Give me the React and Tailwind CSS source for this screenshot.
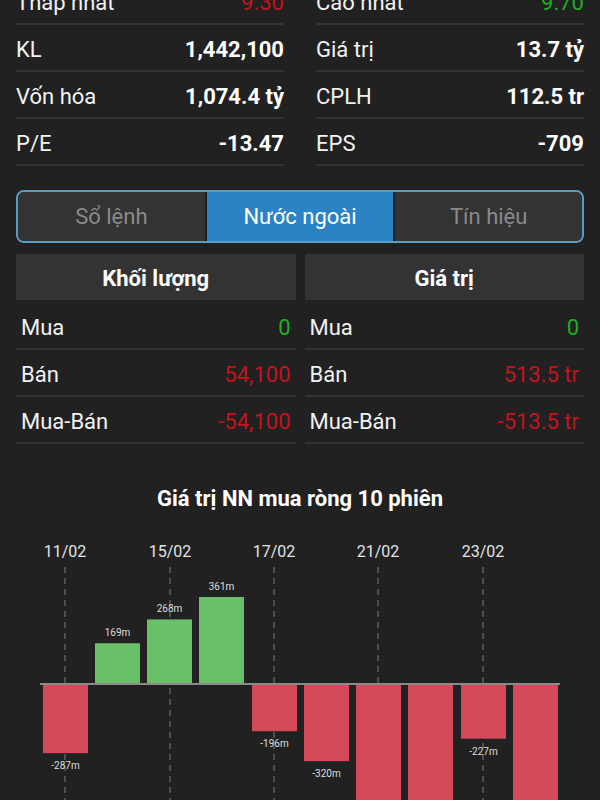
import React from "react";

const GREEN = "text-[#1fae22]";
const RED = "text-[#c3141d]";

const stats = [
  [
    { label: "Thấp nhất", value: "9.30", color: RED, bold: false },
    { label: "KL", value: "1,442,100" },
    { label: "Vốn hóa", value: "1,074.4 tỷ" },
    { label: "P/E", value: "-13.47" },
  ],
  [
    { label: "Cao nhất", value: "9.70", color: GREEN, bold: false },
    { label: "Giá trị", value: "13.7 tỷ" },
    { label: "CPLH", value: "112.5 tr" },
    { label: "EPS", value: "-709" },
  ],
];

const foreign = [
  [
    { label: "Mua", value: "0", color: GREEN },
    { label: "Bán", value: "54,100", color: RED },
    { label: "Mua-Bán", value: "-54,100", color: RED },
  ],
  [
    { label: "Mua", value: "0", color: GREEN },
    { label: "Bán", value: "513.5 tr", color: RED },
    { label: "Mua-Bán", value: "-513.5 tr", color: RED },
  ],
];

// net foreign value per session (millions); no label = runs off screen
const bars = [
  { x: 43, v: -287, label: "-287m" },
  { x: 95, v: 169, label: "169m" },
  { x: 147, v: 268, label: "268m" },
  { x: 199, v: 361, label: "361m" },
  { x: 252, v: -196, label: "-196m" },
  { x: 304, v: -320, label: "-320m" },
  { x: 356, v: -700 },
  { x: 408, v: -700 },
  { x: 461, v: -227, label: "-227m" },
  { x: 513, v: -700 },
];

const dates = [
  { x: 65, t: "11/02" },
  { x: 170, t: "15/02" },
  { x: 274, t: "17/02" },
  { x: 378, t: "21/02" },
  { x: 483, t: "23/02" },
];

function Chart() {
  const base = 684;
  const scale = 0.241;
  return (
    <svg viewBox="0 530 600 270" width="600" height="270" className="block" style={{ fontFamily: "Roboto, sans-serif" }}>
      {dates.map((d) => (
        <g key={d.t}>
          <text x={d.x} y={557} textAnchor="middle" fontSize="16" fill="#e2e2e2">
            {d.t}
          </text>
          <line x1={d.x} y1={567} x2={d.x} y2={800} stroke="#7a7a7a" strokeWidth="1" strokeDasharray="6 5" />
        </g>
      ))}
      {bars.map((b, i) => {
        const h = Math.abs(b.v) * scale;
        const pos = b.v > 0;
        const y = pos ? base - h : base;
        return (
          <g key={i}>
            <rect x={b.x} y={y} width="45" height={h} fill={pos ? "#6cbf69" : "#d44a5b"} />
            {b.label && (
              <text
                x={b.x + 22.5}
                y={pos ? y - 7 : base + h + 16}
                textAnchor="middle"
                fontSize="10"
                fill="#dddddd"
              >
                {b.label}
              </text>
            )}
          </g>
        );
      })}
      <line x1={40} y1={base} x2={560} y2={base} stroke="#8a8a8a" strokeWidth="2" />
    </svg>
  );
}

export default function App() {
  return (
    <div
      className="w-[600px] h-[800px] overflow-hidden bg-[#212121] text-white"
      style={{ fontFamily: "Roboto, 'Noto Sans', sans-serif" }}
    >
      {/* stats block, first row scrolled off the top */}
      <div className="px-4 -mt-[22px] grid grid-cols-2 gap-8">
        {stats.map((col, ci) => (
          <div key={ci}>
            {col.map((r) => (
              <div
                key={r.label}
                className="h-[47px] pt-[3px] border-b-2 border-[#333333] flex items-center justify-between text-[22px]"
              >
                <span className="text-[#f2f2f2]">{r.label}</span>
                <span className={`${r.color || "text-white"} ${r.bold === false ? "" : "font-bold"}`}>{r.value}</span>
              </div>
            ))}
          </div>
        ))}
      </div>

      {/* tabs */}
      <div className="mx-4 mt-[24px] h-[53px] border-2 border-[#5b9dc4] rounded-lg overflow-hidden flex text-[22px]">
        <div className="flex-1 bg-[#333333] text-[#8a8a8a] flex items-center justify-center border-r-2 border-[#1c1c1c]">
          Sổ lệnh
        </div>
        <div className="flex-1 bg-[#2a83c4] text-white flex items-center justify-center">Nước ngoài</div>
        <div className="flex-1 bg-[#333333] text-[#8a8a8a] flex items-center justify-center border-l-2 border-[#1c1c1c]">
          Tín hiệu
        </div>
      </div>

      {/* foreign trading table */}
      <div className="px-4 mt-[11px] grid grid-cols-2 gap-[9px]">
        {["Khối lượng", "Giá trị"].map((h, ci) => (
          <div key={h}>
            <div className="h-[46px] pt-[2px] bg-[#333333] flex items-center justify-center text-[22px] font-bold">{h}</div>
            <div className="mt-[3px]">
              {foreign[ci].map((r) => (
                <div
                  key={r.label}
                  className="h-[47px] pt-[3px] border-b-2 border-[#333333] flex items-center justify-between px-[5px] text-[22px]"
                >
                  <span className="text-[#f2f2f2]">{r.label}</span>
                  <span className={r.color}>{r.value}</span>
                </div>
              ))}
            </div>
          </div>
        ))}
      </div>

      {/* chart */}
      <div className="mt-[43px] text-center text-[22px] font-bold leading-6">Giá trị NN mua ròng 10 phiên</div>
      <div className="mt-[19px]">
        <Chart />
      </div>
    </div>
  );
}
